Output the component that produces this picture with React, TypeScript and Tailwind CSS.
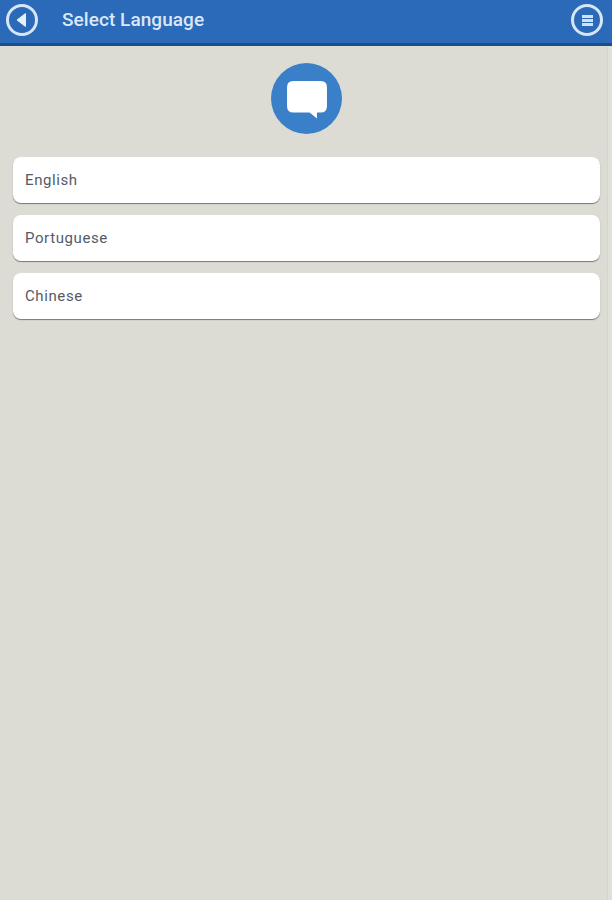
const languages = ["English", "Portuguese", "Chinese"];

function CircleButton({ children }: { children: React.ReactNode }) {
  return (
    <button className="flex h-[32px] w-[32px] items-center justify-center rounded-full border-[3px] border-[#d8e5f6]">
      {children}
    </button>
  );
}

export default function App() {
  return (
    <div className="flex h-[900px] w-[612px] flex-col overflow-hidden bg-[#dddcd4] font-['Roboto',sans-serif]">
      <header className="flex h-[46px] shrink-0 items-center justify-between border-b-[3px] border-[#17508f] bg-[#2a6ab9] pb-[3px] pl-[6px] pr-[9px]">
        <div className="flex items-center">
          <CircleButton>
            <svg width="12" height="16" viewBox="0 0 12 16" className="mr-[3px]">
              <path d="M10.5 1.5 V14.5 L2 8 Z" fill="#e6effa" stroke="#e6effa" strokeLinejoin="round" />
            </svg>
          </CircleButton>
          <h1 className="mb-[2px] ml-[24px] text-[19px] font-medium leading-none tracking-[0.06px] text-[#dbe7f7]">Select Language</h1>
        </div>
        <CircleButton>
          <div className="flex w-[11px] flex-col gap-[1px]">
            <span className="h-[3px] bg-[#d3e1f4]" />
            <span className="h-[3px] bg-[#d3e1f4]" />
            <span className="h-[3px] bg-[#d3e1f4]" />
          </div>
        </CircleButton>
      </header>

      <div className="flex flex-1">
        <main className="flex flex-1 flex-col pl-[13px] pr-[7px]">
          <div className="mt-[17px] flex justify-center">
            <div className="flex h-[71px] w-[71px] items-center justify-center rounded-full bg-[#3a80c9]">
              <svg width="42" height="40" viewBox="0 0 40 38" className="mt-[3px]">
                <path
                  d="M7 1 H33 Q39 1 39 7 V25 Q39 31 33 31 H29.5 V36.5 L22.5 31 H7 Q1 31 1 25 V7 Q1 1 7 1 Z"
                  fill="#ffffff"
                />
              </svg>
            </div>
          </div>

          <ul className="mt-[23px] flex flex-col gap-[12px]">
            {languages.map((name) => (
              <li
                key={name}
                className="flex h-[46px] items-center rounded-[8px] bg-white pl-[12px] text-[15px] leading-none tracking-[0.6px] text-[#555a66] shadow-[0_1px_1px_#77776f]"
              >
                {name}
              </li>
            ))}
          </ul>
        </main>
        {/* scrollbar track */}
        <div className="w-[5px] border-l border-[#d6d5cc] bg-[#e0dfd8]" />
      </div>
    </div>
  );
}
